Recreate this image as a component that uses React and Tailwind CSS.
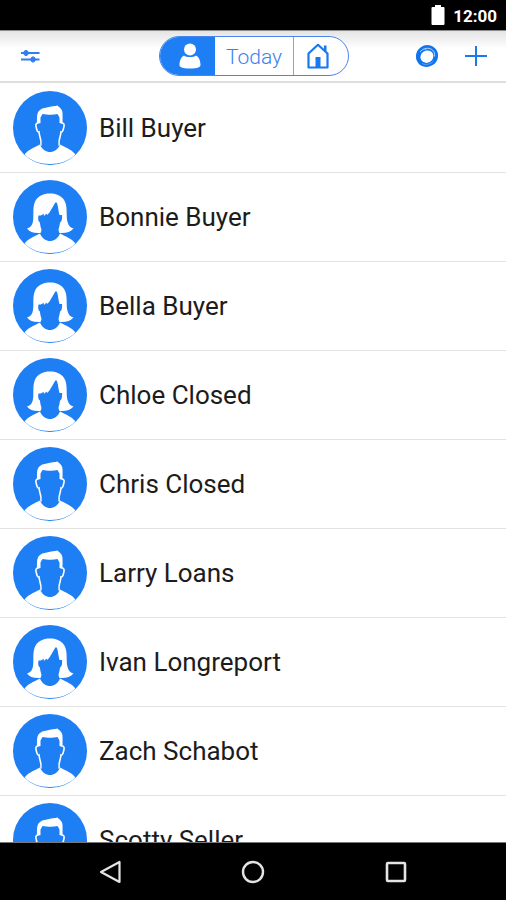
import React, { useState } from 'react';

const contacts = [
  { id: 1, name: 'Bill Buyer', avatar: 'male' },
  { id: 2, name: 'Bonnie Buyer', avatar: 'female' },
  { id: 3, name: 'Bella Buyer', avatar: 'female' },
  { id: 4, name: 'Chloe Closed', avatar: 'female' },
  { id: 5, name: 'Chris Closed', avatar: 'male' },
  { id: 6, name: 'Larry Loans', avatar: 'male' },
  { id: 7, name: 'Ivan Longreport', avatar: 'female' },
  { id: 8, name: 'Zach Schabot', avatar: 'male' },
  { id: 9, name: 'Scotty Seller', avatar: 'male' },
];

const Shoulders = () => (
  <path
    d="M11.5 63.5C15 59 20 57 27 53.5C29.5 59 33 61 37 61C41 61 44.5 59 47 53.5C54 57 59 59 62.5 63.5C56 70 47 73 37 73C27 73 18 70 11.5 63.5Z"
    fill="#fff"
  />
);

const MaleAvatar = () => (
  <svg viewBox="0 0 74 74" className="w-[74px] h-[74px] shrink-0" aria-hidden="true">
    <circle cx="37" cy="37" r="37" fill="#1e7ff4" />
    <Shoulders />
    {/* Hair and the thin outline of ears and jaw */}
    <path
      d="M24 33C24 26 23.5 21.5 27 19C30 16.5 33 17 36 16C39 15 41 15.500 44.5 14.5C45.5 16 49.5 17.5 49.5 22C49.7 26 49.5 29 49.5 33L46.500 32V26.500L44.500 23C39 24.500 33 23.500 29.500 23L27.500 26.500V32Z"
      fill="#fff"
    />
    <path
      d="M25 32C22.5 32 22.500 34.500 23.500 37.500C24 40 25 41.500 26 41C26.500 45 27.500 48 28 50V54.500M49 32C51.500 32 51.500 34.500 50.500 37.500C50 40 49 41.500 48 41C47.500 45 46.500 48 46 50V54.500"
      fill="none"
      stroke="#fff"
      strokeWidth="1.600"
    />
    <path d="M28.800 49H45.200V54C43.500 57 40 59 37 59C34 59 30.500 57 28.800 54Z" fill="#1e7ff4" />
  </svg>
);

const FemaleAvatar = () => (
  <svg viewBox="0 0 74 74" className="w-[74px] h-[74px] shrink-0" aria-hidden="true">
    <circle cx="37" cy="37" r="37" fill="#1e7ff4" />
    <Shoulders />
    {/* Bob haircut with flipped ends */}
    <path
      d="M20 41C21 36 19.5 29 21.5 23C24 16 30 13.5 37 13.5C44 13.5 50 16 52.5 23C54.5 29 53 36 54.5 42C55.500 46 57.500 47.500 60.500 48.500C57.500 52 53 53.500 46.500 53L45 50H29L27.500 53C21 53.500 16.500 52 14 48.500C17.500 47.500 19.500 45 20 41Z"
      fill="#fff"
    />
    <path
      d="M25.500 35.500C28 36 30 34.500 30.500 33.500L31 36L33.500 33.500L34 35C38 32 40 25 43 22C45 23.500 45 29 46.500 35H49C49.500 39 48.500 42 47 42.500C46.500 47 45.500 49 45.500 50V53.500C43.500 57 40 59 37 59C34 59 30 57 28.500 53.500V50C28 48 27 45 27 42.500C25 41.500 25 38 25.500 35.500Z"
      fill="#1e7ff4"
    />
  </svg>
);

const StatusBar = () => (
  <div className="h-[30px] shrink-0 bg-black flex items-center justify-end gap-2 pr-[9px] text-white">
    <svg viewBox="0 0 14 20" className="w-[14px] h-5" fill="#fff" aria-hidden="true">
      <path d="M4 0H10V2H12.5Q13.5 2 13.5 3V19Q13.5 20 12.5 20H1.5Q.5 20 .5 19V3Q.5 2 1.5 2H4Z" />
    </svg>
    <span className="text-[17px] leading-5 font-bold pt-0.5">12:00</span>
  </div>
);

const Header = ({ tab, setTab }) => (
  <header className="h-[53px] shrink-0 flex items-center border-b-2 border-b-[#dedede] border-t border-t-[#8c8c8c] bg-linear-to-b from-[#e4e4e4] to-white to-35% pl-[21px] pr-[19px]">
    <div className="flex-1 flex">
      <button aria-label="Filters" className="cursor-pointer">
        <svg viewBox="0 0 19 14" className="w-[19px] h-[14px]" stroke="#2f7ff0" fill="#2f7ff0" aria-hidden="true">
          <path d="M0 4H18.5M0 10.5H18.5" strokeWidth="1.8" />
          <path d="M5 1.2L7 2.5V5.5L5 6.8L3 5.5V2.5ZM12 7.7L14 9V12L12 13.3L10 12V9Z" strokeWidth="1" />
        </svg>
      </button>
    </div>
    <div className="flex w-[190px] h-10 rounded-full border border-[#4a86ea] overflow-hidden bg-white">
      <button
        aria-label="Contacts"
        aria-pressed={tab === 'contacts'}
        onClick={() => setTab('contacts')}
        className="w-[55px] flex items-center justify-center pl-1 bg-[#1e7ff4] cursor-pointer"
      >
        <svg viewBox="0 0 22 26" className="w-[22px] h-[26px]" fill="#fff" aria-hidden="true">
          <circle cx="11" cy="6.5" r="6" />
          <path d="M5 12.5C7 14.5 15 14.5 17 12.5C20 14 21.5 18 21.5 22C21.5 24 19 25.5 11 25.5C3 25.5 .5 24 .5 22C.5 18 2 14 5 12.5Z" />
        </svg>
      </button>
      <button
        aria-pressed={tab === 'today'}
        onClick={() => setTab('today')}
        className="w-[78px] text-[21px] leading-7 pt-0.5 font-light text-[#3b82f0] cursor-pointer"
      >
        Today
      </button>
      <button
        aria-label="Homes"
        aria-pressed={tab === 'homes'}
        onClick={() => setTab('homes')}
        className="flex-1 flex items-center justify-center pr-1.5 border-l border-[#7ba6ee] cursor-pointer"
      >
        <svg viewBox="0 0 22 26" className="w-[22px] h-[26px]" fill="none" stroke="#1878f0" strokeWidth="2" aria-hidden="true">
          <path d="M1.500 10.500L11 1.800L20.500 10.500V24.500H1.500Z" strokeWidth="2.200" strokeLinejoin="round" />
          <path d="M18.200 8V2.500" strokeWidth="2.600" />
          <path d="M8.500 25V14H13.500V25Z" fill="#1878f0" stroke="none" />
        </svg>
      </button>
    </div>
    <div className="flex-1 flex items-center justify-end gap-[26px]">
      <button aria-label="Activity" className="cursor-pointer">
        <svg viewBox="0 0 24 24" className="w-6 h-6" fill="none" stroke="#0f74ee" aria-hidden="true">
          <ellipse cx="12" cy="12" rx="9.200" ry="8.800" strokeWidth="4" transform="rotate(-35 12 12)" />
          <ellipse cx="11.500" cy="12.500" rx="7.500" ry="6.800" strokeWidth="1.500" transform="rotate(-35 12 12)" />
          <path d="M5 8C8 4 14 3 17.500 6C19.500 8 20 10 19.500 12.500" stroke="#b5d4fb" strokeWidth="1" />
          <path d="M7 19.500C11 21.500 16 20 18.500 17" stroke="#7fb5f8" strokeWidth=".7" />
        </svg>
      </button>
      <button aria-label="Add contact" className="cursor-pointer">
        <svg viewBox="0 0 22 22" className="w-[22px] h-[22px]" stroke="#1878f0" strokeWidth="2" aria-hidden="true">
          <path d="M11 1V21M0 11H22" />
        </svg>
      </button>
    </div>
  </header>
);

const NavBar = () => (
  <nav className="h-[58px] shrink-0 bg-black border-t border-[#777] flex items-center justify-center gap-[120px]">
    <button aria-label="Back" className="cursor-pointer">
      <svg viewBox="0 0 22 24" className="w-[22px] h-6" fill="none" stroke="#e4e4e4" strokeWidth="2.2" aria-hidden="true">
        <path d="M20.500 2V22L2 12Z" strokeLinejoin="round" />
      </svg>
    </button>
    <button aria-label="Home" className="cursor-pointer">
      <svg viewBox="0 0 24 24" className="w-6 h-6" fill="none" stroke="#e4e4e4" strokeWidth="2.4" aria-hidden="true">
        <circle cx="12" cy="12" r="10" />
      </svg>
    </button>
    <button aria-label="Overview" className="cursor-pointer">
      <svg viewBox="0 0 22 22" className="w-[22px] h-[22px]" fill="none" stroke="#e4e4e4" strokeWidth="2.6" aria-hidden="true">
        <rect x="2" y="2" width="18" height="18" rx="1" />
      </svg>
    </button>
  </nav>
);

const App = () => {
  const [tab, setTab] = useState('contacts');

  return (
    <div className="h-screen flex flex-col bg-white font-[Roboto,sans-serif]">
      <StatusBar />
      <Header tab={tab} setTab={setTab} />
      <main className="flex-1 min-h-0 overflow-hidden pt-px">
        <ul>
          {contacts.map((contact) => (
            <li key={contact.id} className="border-b border-[#e2e2e2]">
              <a href={`#contact-${contact.id}`} className="flex items-center gap-3 pl-[13px] py-[7px]">
                {contact.avatar === 'male' ? <MaleAvatar /> : <FemaleAvatar />}
                <span className="text-[26px] leading-8 text-[#1c1c1c]">{contact.name}</span>
              </a>
            </li>
          ))}
        </ul>
      </main>
      <NavBar />
    </div>
  );
};

export default App;
